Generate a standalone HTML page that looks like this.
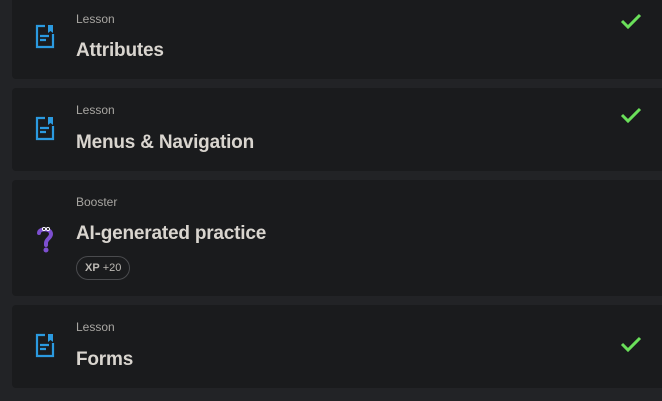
<!DOCTYPE html>
<html><head><style>
body{margin:0;width:662px;height:401px;background:#222326;font-family:"Liberation Sans",sans-serif;position:relative;overflow:hidden}
.card{position:absolute;left:12px;width:660px;background:#1a1b1d;border-radius:4px}
.lbl{position:absolute;left:64px;font-size:12px;color:#a8a6a2}
.ttl{position:absolute;left:64px;font-size:19px;font-weight:bold;color:#d9d5cf;letter-spacing:-0.2px}
.ic{position:absolute;left:22px}
.ck{position:absolute;left:608px}
.xp{position:absolute;left:64px;height:22px;border:1px solid #4a4b4e;border-radius:12px;font-size:11px;color:#bcb9b4;line-height:22px;padding:0 8px}
</style></head><body>
<svg width="0" height="0" style="position:absolute"><defs>
<g id="doc"><path d="M11 2H3v21h16V10" fill="none" stroke="#2b9ae0" stroke-width="2.2"/><path d="M14 1h5v8l-2.5-2-2.5 2z" fill="#2b9ae0"/><path d="M6 12h9M6 16h6" stroke="#2b9ae0" stroke-width="2.2"/></g>
<path id="chk" d="M2 9l6 6L20 3" fill="none" stroke="#6ae05a" stroke-width="3"/>
</defs></svg>

<div class="card" style="top:-4px;height:83px">
<svg class="ic" style="top:28px" width="22" height="25"><use href="#doc"/></svg>
<div class="lbl" style="top:16px">Lesson</div>
<div class="ttl" style="top:44px">Attributes</div>
<svg class="ck" style="top:16px" width="22" height="18"><use href="#chk"/></svg>
</div>

<div class="card" style="top:88px;height:83px">
<svg class="ic" style="top:28px" width="22" height="25"><use href="#doc"/></svg>
<div class="lbl" style="top:15px">Lesson</div>
<div class="ttl" style="top:44px">Menus &amp; Navigation</div>
<svg class="ck" style="top:18px" width="22" height="18"><use href="#chk"/></svg>
</div>

<div class="card" style="top:180px;height:116px">
<svg class="ic" style="top:44px" width="22" height="30" viewBox="0 0 22 30"><path d="M5 9c0-5 12-5 12 1 0 4-5 5-5 9v2" fill="none" stroke="#7d4fd0" stroke-width="4" stroke-linecap="round"/><circle cx="12" cy="26" r="2.5" fill="#7d4fd0"/><circle cx="10" cy="5" r="2" fill="#fff"/><circle cx="14" cy="5" r="2" fill="#fff"/><circle cx="10" cy="5" r="1" fill="#000"/><circle cx="14" cy="5" r="1" fill="#000"/></svg>
<div class="lbl" style="top:15px">Booster</div>
<div class="ttl" style="top:43px">AI-generated practice</div>
<div class="xp" style="top:76px"><b>XP</b> +20</div>
</div>

<div class="card" style="top:305px;height:83px">
<svg class="ic" style="top:28px" width="22" height="25"><use href="#doc"/></svg>
<div class="lbl" style="top:15px">Lesson</div>
<div class="ttl" style="top:44px">Forms</div>
<svg class="ck" style="top:30px" width="22" height="18"><use href="#chk"/></svg>
</div>
</body></html>
